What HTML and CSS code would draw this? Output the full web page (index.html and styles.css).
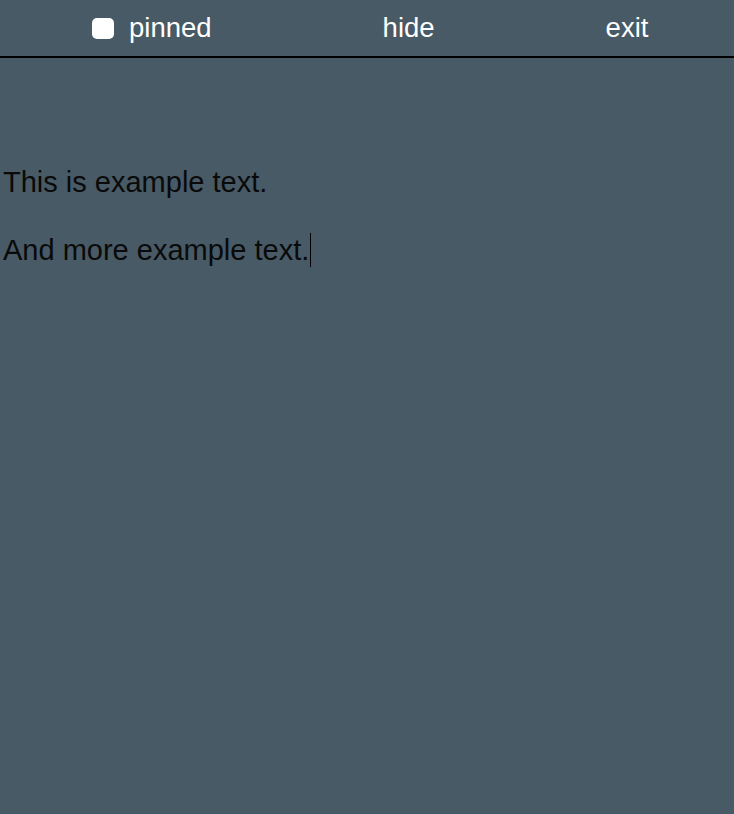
FILE: index.html
```html
<!DOCTYPE html>
<html>
<head>
<meta charset="utf-8">
<link rel="stylesheet" href="styles.css">
</head>
<body>
<header class="toolbar">
  <label class="pin">
    <span class="box"></span>
    <span class="label">pinned</span>
  </label>
  <span class="action">hide</span>
  <span class="action">exit</span>
</header>
<main class="editor">
  <p class="line">This is example text.</p>
  <p class="line">And more example text.<span class="caret"></span></p>
</main>
</body>
</html>
```
FILE: styles.css
```css
html, body {
  margin: 0;
  padding: 0;
  background: #475a65;
  height: 100%;
}
body {
  font-family: "Liberation Sans", Arial, sans-serif;
}
.toolbar {
  height: 56px;
  border-bottom: 2px solid #000;
  display: flex;
  align-items: center;
  padding-left: 92px;
  gap: 171px;
  color: #fff;
  font-size: 27.5px;
}
.pin {
  display: flex;
  align-items: center;
  gap: 15px;
}
.box {
  width: 22px;
  height: 21px;
  background: #fff;
  border-radius: 5px;
  margin-top: 1px;
}
.label {
  line-height: 28px;
}
.action {
  line-height: 28px;
}
.editor {
  padding: 107px 0 0 3px;
  color: #0a0a0a;
  font-size: 29px;
}
.line {
  margin: 0 0 34px;
  line-height: 34px;
}
.caret {
  display: inline-block;
  width: 1px;
  height: 34px;
  background: #000;
  vertical-align: top;
  margin-left: 1px;
}
```
